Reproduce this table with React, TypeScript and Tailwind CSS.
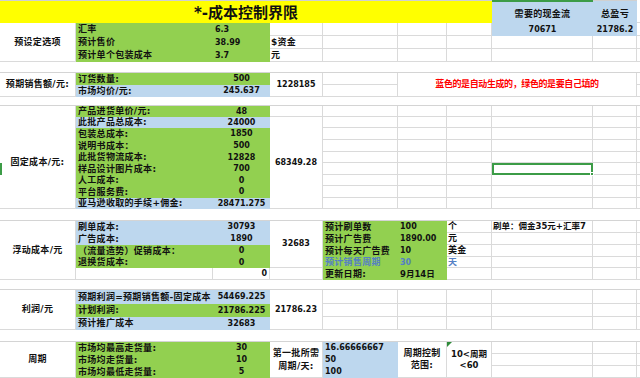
import React from "react";

const G = "border-r border-b border-[#dadada]";
const T = "text-[9px] tracking-[0.3px] font-bold";
const N = "text-[8px] font-bold";
const GR = "bg-[#92d050]";
const BL = "bg-[#bdd7ee]";

function Cell({ pos, cls = "", children }: { pos: string; cls?: string; children?: React.ReactNode }) {
  return (
    <div className={`relative flex whitespace-nowrap overflow-hidden leading-none text-[#111] ${pos} ${cls}`}>
      {children}
    </div>
  );
}

function Lab({ pos, bg, children }: { pos: string; bg: string; children: React.ReactNode }) {
  return (
    <Cell pos={pos} cls={`${bg} items-center pl-[2px] ${T}`}>
      {children}
    </Cell>
  );
}

function Val({ pos, bg, children }: { pos: string; bg: string; children: React.ReactNode }) {
  return (
    <Cell pos={pos} cls={`${bg} items-center justify-center ${N}`}>
      {children}
    </Cell>
  );
}

export default function App() {
  const empties = Array.from({ length: 330 });
  return (
    <div className="w-[640px] h-[378px] overflow-hidden bg-white font-[family-name:DejaVu_Sans,Noto_Sans_CJK_SC,sans-serif]">
      <div className="relative grid w-[657px] h-[378px] grid-cols-[76px_137px_57px_53px_75px_49px_45px_101px_44px_20px] grid-rows-[23px_13px_13px_13px_11px_12px_12px_9px_11px_11px_12px_12px_11px_12px_11px_12px_11px_12px_12px_12px_12px_11px_12px_10px_14px_13px_13px_12px_12px_12px_12px]">
        {/* Title row */}
        <Cell pos="col-start-1 col-span-7 row-start-1" cls="bg-[#ffff00] border-t border-t-[#d0d0d0] items-center justify-center pt-[3px] text-[15px] font-bold">
          *-成本控制界限
        </Cell>
        <Cell pos="col-start-8 row-start-1" cls={`${BL} border-t-2 border-t-[#3c9c47] items-end justify-center pb-[4px] ${T}`}>
          需要的现金流
        </Cell>
        <Cell pos="col-start-9 row-start-1" cls={`${BL} border-t border-t-[#d0d0d0] items-end justify-center pb-[4px] ${T}`}>
          总盈亏
        </Cell>
        <Cell pos="col-start-8 row-start-2" cls={`${BL} items-center justify-center ${N}`}>70671</Cell>
        <Cell pos="col-start-9 row-start-2" cls={`${BL} items-center justify-center ${N}`}>21786.2</Cell>

        {/* Preset section */}
        <Cell pos="col-start-1 row-start-2 row-span-3" cls={`${G} items-center justify-center ${T}`}>预设定选项</Cell>
        <Lab pos="col-start-2 row-start-2" bg={GR}>汇率</Lab>
        <Cell pos="col-start-3 row-start-2" cls={`${GR} items-center pl-[2px] ${N}`}>6.3</Cell>
        <Lab pos="col-start-2 row-start-3" bg={GR}>预计售价</Lab>
        <Cell pos="col-start-3 row-start-3" cls={`${GR} items-center pl-[2px] ${N}`}>38.99</Cell>
        <Lab pos="col-start-2 row-start-4" bg={GR}>预计单个包装成本</Lab>
        <Cell pos="col-start-3 row-start-4" cls={`${GR} items-center pl-[2px] ${N}`}>3.7</Cell>
        <Cell pos="col-start-4 row-start-3" cls={`${G} items-center pl-[1px] ${T}`}>$资金</Cell>
        <Cell pos="col-start-4 row-start-4" cls={`${G} items-center pl-[1px] ${T}`}>元</Cell>

        <Cell pos="col-span-full row-start-5" cls="border-b border-[#d4d4d4]" />

        {/* Sales section */}
        <Cell pos="col-start-1 row-start-6 row-span-2" cls={`${G} items-center justify-center ${T}`}>预期销售额/元:</Cell>
        <Lab pos="col-start-2 row-start-6" bg={GR}>订货数量:</Lab>
        <Val pos="col-start-3 row-start-6" bg={GR}>500</Val>
        <Lab pos="col-start-2 row-start-7" bg={BL}>市场均价/元:</Lab>
        <Val pos="col-start-3 row-start-7" bg={BL}>245.637</Val>
        <Cell pos="col-start-4 row-start-6 row-span-2" cls={`${G} items-center justify-center ${N}`}>1228185</Cell>
        <Cell pos="col-start-6 col-span-4 row-start-6 row-span-2" cls={`${G} items-center justify-center text-[9px] font-bold tracking-[-0.4px] text-[#ff0000]`}>
          蓝色的是自动生成的，绿色的是要自己填的
        </Cell>

        <Cell pos="col-span-full row-start-8" cls="border-b border-[#d4d4d4]" />

        {/* Fixed cost section */}
        <Cell pos="col-start-1 row-start-9 row-span-9" cls={`${G} items-center justify-center pt-[10px] ${T}`}>固定成本/元:</Cell>
        <Lab pos="col-start-2 row-start-9" bg={GR}>产品进货单价/元:</Lab>
        <Val pos="col-start-3 row-start-9" bg={GR}>48</Val>
        <Lab pos="col-start-2 row-start-10" bg={BL}>此批产品总成本:</Lab>
        <Val pos="col-start-3 row-start-10" bg={BL}>24000</Val>
        <Lab pos="col-start-2 row-start-11" bg={GR}>包装总成本:</Lab>
        <Val pos="col-start-3 row-start-11" bg={GR}>1850</Val>
        <Lab pos="col-start-2 row-start-12" bg={GR}>说明书成本：</Lab>
        <Val pos="col-start-3 row-start-12" bg={GR}>500</Val>
        <Lab pos="col-start-2 row-start-13" bg={GR}>此批货物流成本:</Lab>
        <Val pos="col-start-3 row-start-13" bg={GR}>12828</Val>
        <Lab pos="col-start-2 row-start-14" bg={GR}>样品设计图片成本:</Lab>
        <Val pos="col-start-3 row-start-14" bg={GR}>700</Val>
        <Lab pos="col-start-2 row-start-15" bg={GR}>人工成本:</Lab>
        <Val pos="col-start-3 row-start-15" bg={GR}>0</Val>
        <Lab pos="col-start-2 row-start-16" bg={GR}>平台服务费:</Lab>
        <Val pos="col-start-3 row-start-16" bg={GR}>0</Val>
        <Lab pos="col-start-2 row-start-17" bg={BL}>亚马逊收取的手续+佣金:</Lab>
        <Val pos="col-start-3 row-start-17" bg={BL}>28471.275</Val>
        <Cell pos="col-start-4 row-start-10 row-span-8" cls={`${G} items-center justify-center ${N}`}>68349.28</Cell>
        <div className="col-start-8 row-start-14 relative border-2 border-[#3c9c47]">
          <div className="absolute right-[-3px] bottom-[-3px] w-[4px] h-[4px] bg-[#3c9c47] border border-white" />
        </div>

        <Cell pos="col-span-full row-start-18" cls="border-b border-[#d4d4d4]" />

        {/* Floating cost section */}
        <Cell pos="col-start-1 row-start-19 row-span-5" cls={`${G} items-center justify-center ${T}`}>浮动成本/元</Cell>
        <Lab pos="col-start-2 row-start-19" bg={BL}>刷单成本:</Lab>
        <Val pos="col-start-3 row-start-19" bg={BL}>30793</Val>
        <Lab pos="col-start-2 row-start-20" bg={BL}>广告成本:</Lab>
        <Val pos="col-start-3 row-start-20" bg={BL}>1890</Val>
        <Lab pos="col-start-2 row-start-21" bg={GR}>（流量造势）促销成本：</Lab>
        <Val pos="col-start-3 row-start-21" bg={GR}>0</Val>
        <Lab pos="col-start-2 row-start-22" bg={GR}>退换货成本:</Lab>
        <Val pos="col-start-3 row-start-22" bg={GR}>0</Val>
        <Cell pos="col-start-2 row-start-23" cls={G} />
        <Cell pos="col-start-3 row-start-23" cls={`${G} items-center justify-end pr-[2px] ${N}`}>0</Cell>
        <Cell pos="col-start-4 row-start-19 row-span-4" cls={`${G} items-center justify-center ${N}`}>32683</Cell>

        <Lab pos="col-start-5 row-start-19" bg={GR}>预计刷单数</Lab>
        <Cell pos="col-start-6 row-start-19" cls={`${GR} items-center pl-[2px] ${N}`}>100</Cell>
        <Lab pos="col-start-5 row-start-20" bg={GR}>预计广告费</Lab>
        <Cell pos="col-start-6 row-start-20" cls={`${GR} items-center pl-[2px] ${N}`}>1890.00</Cell>
        <Lab pos="col-start-5 row-start-21" bg={GR}>预计每天广告费</Lab>
        <Cell pos="col-start-6 row-start-21" cls={`${GR} items-center pl-[2px] ${N}`}>10</Cell>
        <Cell pos="col-start-5 row-start-22" cls={`${GR} items-center pl-[2px] ${T} text-[#5580c4]`}>预计销售周期</Cell>
        <Cell pos="col-start-6 row-start-22" cls={`${GR} items-center pl-[2px] ${N} text-[#5580c4]`}>30</Cell>
        <Lab pos="col-start-5 row-start-23" bg={GR}>更新日期:</Lab>
        <Cell pos="col-start-6 row-start-23" cls={`${GR} items-center pl-[2px] text-[8.5px] font-bold`}>9月14日</Cell>
        <Cell pos="col-start-7 row-start-19" cls={`${G} items-center pl-[1px] ${T}`}>个</Cell>
        <Cell pos="col-start-7 row-start-20" cls={`${G} items-center pl-[1px] ${T}`}>元</Cell>
        <Cell pos="col-start-7 row-start-21" cls={`${G} items-center pl-[1px] ${T}`}>美金</Cell>
        <Cell pos="col-start-7 row-start-22" cls={`${G} items-center pl-[1px] ${T} text-[#5580c4]`}>天</Cell>
        <Cell pos="col-start-8 row-start-19" cls={`${G} items-center pl-[1px] text-[8.5px] font-bold`}>刷单：佣金35元+汇率7</Cell>

        <Cell pos="col-span-full row-start-24" cls="border-b border-[#d4d4d4]" />

        {/* Profit section */}
        <Cell pos="col-start-1 row-start-25 row-span-3" cls={`${G} items-center justify-center ${T}`}>利润/元</Cell>
        <Lab pos="col-start-2 row-start-25" bg={BL}>预期利润=预期销售额-固定成本</Lab>
        <Val pos="col-start-3 row-start-25" bg={BL}>54469.225</Val>
        <Lab pos="col-start-2 row-start-26" bg={GR}>计划利润:</Lab>
        <Val pos="col-start-3 row-start-26" bg={GR}>21786.225</Val>
        <Lab pos="col-start-2 row-start-27" bg={BL}>预计推广成本</Lab>
        <Val pos="col-start-3 row-start-27" bg={BL}>32683</Val>
        <Cell pos="col-start-4 row-start-25 row-span-3" cls={`${G} items-center justify-center ${N}`}>21786.23</Cell>

        <Cell pos="col-span-full row-start-28" cls="border-b border-[#d4d4d4]" />

        {/* Period section */}
        <Cell pos="col-start-1 row-start-29 row-span-3" cls={`${G} items-center justify-center ${T}`}>周期</Cell>
        <Lab pos="col-start-2 row-start-29" bg={GR}>市场均最高走货量:</Lab>
        <Val pos="col-start-3 row-start-29" bg={GR}>30</Val>
        <Lab pos="col-start-2 row-start-30" bg={GR}>市场均走货量:</Lab>
        <Val pos="col-start-3 row-start-30" bg={GR}>10</Val>
        <Lab pos="col-start-2 row-start-31" bg={GR}>市场均最低走货量:</Lab>
        <Val pos="col-start-3 row-start-31" bg={GR}>5</Val>
        <Cell pos="col-start-4 row-start-29 row-span-3" cls={`${G} flex-col items-center justify-center gap-[4px] ${T}`}>
          <span>第一批所需</span>
          <span>周期/天:</span>
        </Cell>
        <Cell pos="col-start-5 row-start-29" cls={`${BL} items-center pl-[2px] ${N}`}>16.66666667</Cell>
        <Cell pos="col-start-5 row-start-30" cls={`${BL} items-center pl-[2px] ${N}`}>50</Cell>
        <Cell pos="col-start-5 row-start-31" cls={`${BL} items-center pl-[2px] ${N}`}>100</Cell>
        <Cell pos="col-start-6 row-start-29 row-span-3" cls={`${G} flex-col items-center justify-center gap-[3px] ${T}`}>
          <span>周期控制</span>
          <span>范围:</span>
        </Cell>
        <Cell pos="col-start-7 row-start-29 row-span-3" cls={`${G} flex-col items-center justify-center gap-[3px] text-[8.5px] font-bold`}>
          <span>10&lt;周期</span>
          <span>&lt;60</span>
          <div className="absolute left-0 top-0 w-0 h-0 border-t-[5px] border-t-[#2e8b3a] border-r-[5px] border-r-transparent" />
        </Cell>

        {empties.map((_, i) => (
          <div key={i} className={G} />
        ))}

        <div className="absolute left-0 top-[163px] w-[2px] h-[12px] bg-[#3c9c47]" />
      </div>
    </div>
  );
}
